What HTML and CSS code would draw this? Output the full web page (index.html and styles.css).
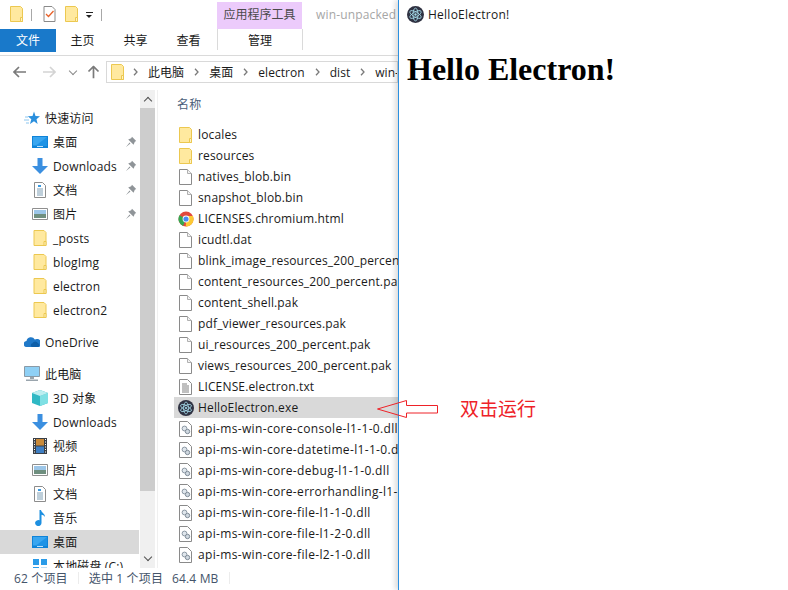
FILE: index.html
```html
<!DOCTYPE html>
<html lang="zh-CN">
<head>
  <meta charset="UTF-8">
  <title>HelloElectron</title>
  <link rel="stylesheet" href="styles.css">
</head>
<body>

  <!-- Icon sprites -->
  <svg class="sprites" width="0" height="0">
    <symbol id="folder" viewBox="0 0 13 16">
      <path d="M.5.5h10l2 2v13H.5z" fill="#ffe99f" stroke="#ecc850"/>
      <path d="M10.5 11.5h2v4h-2z" fill="#fff3c4" stroke="#ecc850"/>
    </symbol>
    <symbol id="file" viewBox="0 0 13 16">
      <path d="M.5.5h8l4 4v11H.5z" fill="#fff" stroke="#8a8a8a"/>
      <path d="M8.5.5v4h4" fill="#f2f2f2" stroke="#b0b0b0"/>
    </symbol>
    <symbol id="textfile" viewBox="0 0 13 16">
      <path d="M.5.5h8l4 4v11H.5z" fill="#fff" stroke="#8a8a8a"/>
      <path d="M3 5h5M3 7h7M3 9h7M3 11h7M3 13h7" stroke="#808080"/>
    </symbol>
    <symbol id="dll" viewBox="0 0 13 16">
      <path d="M.5.5h8l4 4v11H.5z" fill="#fff" stroke="#8a8a8a"/>
      <circle cx="5.5" cy="7.5" r="2.4" fill="#dfe6ec" stroke="#8c98a4"/>
      <circle cx="8.5" cy="10.5" r="2.2" fill="#cfd8e0" stroke="#7f8b97"/>
    </symbol>
    <symbol id="chrome" viewBox="0 0 16 16">
      <circle cx="8" cy="8" r="7.5" fill="#e2483d"/>
      <path d="M8 8 1.5 4.2A7.5 7.5 0 0 0 5 14.9z" fill="#34a853"/>
      <path d="M8 5h7a7.5 7.5 0 0 1-7.2 10.5L8 8z" fill="#fcc934"/>
      <circle cx="8" cy="8" r="3.4" fill="#fff"/>
      <circle cx="8" cy="8" r="2.6" fill="#4a8af4"/>
    </symbol>
    <symbol id="electron" viewBox="0 0 16 16">
      <circle cx="8" cy="8" r="8" fill="#2f3242"/>
      <g fill="none" stroke="#a5d9e8" stroke-width=".8">
        <ellipse cx="8" cy="8" rx="6" ry="2.4" transform="rotate(30 8 8)"/>
        <ellipse cx="8" cy="8" rx="6" ry="2.4" transform="rotate(90 8 8)"/>
        <ellipse cx="8" cy="8" rx="6" ry="2.4" transform="rotate(150 8 8)"/>
      </g>
      <circle cx="8" cy="8" r="1.1" fill="#a5d9e8"/>
    </symbol>
    <symbol id="pin" viewBox="0 0 12 12">
      <path d="M7 .8 11.2 5 9.8 5.8 8.6 8.8 3.2 3.4 6.2 2.2zM4.600 6.600 1 11l4.400-3.600z" fill="#8f9498"/>
    </symbol>
    <symbol id="star" viewBox="0 0 16 16">
      <path d="M10 1.5 11.500 6 16 6.200 12.500 9.200 13.600 14 10 11.300 6 14 7.300 9.200 3.800 6.200 8.500 6z" fill="#2a8fdd"/>
      <path d="M1 7h3M0 10h5M2 13h3" stroke="#8cc6ef"/>
    </symbol>
    <symbol id="desktop" viewBox="0 0 16 12">
      <path d="M0 0h16v12H0z" fill="#0f83d8"/>
      <path d="M1 1h14v8.500H1z" fill="#39a6f0"/>
      <path d="M15 1v8.500H4z" fill="#1e93e6"/>
      <path d="M5 10.500h6" stroke="#bfe3fb"/>
    </symbol>
    <symbol id="download" viewBox="0 0 16 16">
      <path d="M5.500 0h5v8H16l-8 8-8-8h5.500z" fill="#3b8fe0"/>
    </symbol>
    <symbol id="doc" viewBox="0 0 12 16">
      <path d="M.5.5h8l3 3v12H.5z" fill="#fff" stroke="#8c8c8c"/>
      <path d="M3 7h6M3 9h6M3 11h6M3 13h6" stroke="#7f9fb5"/>
      <path d="M4 3h3v2H4z" fill="#3b9ae0"/>
    </symbol>
    <symbol id="picture" viewBox="0 0 16 12">
      <path d="M.5.5h15v11H.5z" fill="#fff" stroke="#8f8f8f"/>
      <path d="M2 2h12v4H2z" fill="#9cc6e8"/>
      <path d="M2 6h12v4H2z" fill="#6f8f7f"/>
    </symbol>
    <symbol id="cloud" viewBox="0 0 16 12">
      <path d="M3 11a3 3 0 0 1-.5-6A4.500 4.500 0 0 1 10.800 3.500 3.700 3.700 0 0 1 15 11z" fill="#1f78c8"/>
      <path d="M8 11a2 2 0 0 1 .5-3.800 3 3 0 0 1 5.500 0A2 2 0 0 1 14 11z" fill="#0e5fa8"/>
    </symbol>
    <symbol id="pc" viewBox="0 0 16 16">
      <path d="M.5.5h15v10H.5z" fill="#8fd0f5" stroke="#8a9aa6"/>
      <path d="M6 11h4v2H6zM2 13.500h12v1.500H2z" fill="#9aa5ad"/>
    </symbol>
    <symbol id="cube" viewBox="0 0 16 16">
      <path d="M8 0 16 3v10l-8 3-8-3V3z" fill="#2fb8c4"/>
      <path d="M8 6v10l8-3V3z" fill="#7fe0e4"/>
      <path d="M8 0 16 3 8 6 0 3z" fill="#bdeef0"/>
    </symbol>
    <symbol id="video" viewBox="0 0 14 16">
      <path d="M0 0h14v16H0z" fill="#3a3f46"/>
      <path d="M3 1h8v6.500H3z" fill="#c98a3a"/>
      <path d="M3 8.500h8V15H3z" fill="#3f7fc4"/>
      <path d="M1 1.500h1M1 4h1M1 6.500h1M1 9h1M1 11.500h1M1 14h1M12 1.500h1M12 4h1M12 6.500h1M12 9h1M12 11.500h1M12 14h1" stroke="#fff"/>
    </symbol>
    <symbol id="music" viewBox="0 0 12 16">
      <path d="M5.500 0h1.500c.5 3 4 3.500 4 7-1-1.500-2.500-2-3.500-2.200V13a3.200 3 0 1 1-2-2.700z" fill="#1d8fe0"/>
    </symbol>
    <symbol id="disk" viewBox="0 0 16 16">
      <path d="M1 1h6v6H1zM9 1h6v6H9zM1 9h6v6H1z" fill="#2a9be8"/>
      <path d="M9 9h6v6H9z" fill="#bfe0f6"/>
    </symbol>
    <symbol id="checklist" viewBox="0 0 12 16">
      <path d="M.5.5h8l3 3v12H.5z" fill="#fff" stroke="#8a8a8a"/>
      <path d="M2.500 8 5 10.500 10 5" fill="none" stroke="#e8622a" stroke-width="1.300"/>
    </symbol>
    <symbol id="chevron" viewBox="0 0 5 8">
      <path d="M1 .8 4 4 1 7.200" fill="none" stroke="#7a7a7a" stroke-width="1.300"/>
    </symbol>
    <symbol id="arrow-left" viewBox="0 0 13 12">
      <path d="M6 1 1 6l5 5M1 6h12" fill="none" stroke="currentColor" stroke-width="1.700"/>
    </symbol>
  </svg>

  <div class="screen">

    <!-- Explorer window -->
    <div class="explorer">

      <div class="titlebar">
        <svg class="ico-folder qat-first"><use href="#folder"/></svg>
        <span class="qat-sep"></span>
        <svg class="ico-file"><use href="#checklist"/></svg>
        <svg class="ico-folder"><use href="#folder"/></svg>
        <span class="qat-drop"></span>
        <span class="qat-sep"></span>
        <span class="tool-tab">应用程序工具</span>
        <span class="win-title">win-unpacked</span>
      </div>

      <div class="ribbon">
        <span class="tab tab-file">文件</span>
        <span class="tab">主页</span>
        <span class="tab">共享</span>
        <span class="tab">查看</span>
        <span class="tab tab-tool">管理</span>
      </div>

      <div class="addressbar">
        <svg class="nav-arrow"><use href="#arrow-left"/></svg>
        <svg class="nav-arrow nav-forward"><use href="#arrow-left"/></svg>
        <span class="nav-down"></span>
        <svg class="nav-arrow nav-up"><use href="#arrow-left"/></svg>
        <div class="crumbs">
          <svg class="ico-folder"><use href="#folder"/></svg>
          <svg class="chev"><use href="#chevron"/></svg><span>此电脑</span>
          <svg class="chev"><use href="#chevron"/></svg><span>桌面</span>
          <svg class="chev"><use href="#chevron"/></svg><span>electron</span>
          <svg class="chev"><use href="#chevron"/></svg><span>dist</span>
          <svg class="chev"><use href="#chevron"/></svg><span>win-unpacked</span>
        </div>
      </div>

      <div class="panes">

        <!-- Navigation pane -->
        <div class="navpane">
          <div class="navtree">
            <div class="nav-row top"><svg class="ico16"><use href="#star"/></svg>快速访问</div>
            <div class="nav-row"><svg class="ico16"><use href="#desktop"/></svg>桌面<svg class="pin"><use href="#pin"/></svg></div>
            <div class="nav-row"><svg class="ico16"><use href="#download"/></svg>Downloads<svg class="pin"><use href="#pin"/></svg></div>
            <div class="nav-row"><svg class="ico16"><use href="#doc"/></svg>文档<svg class="pin"><use href="#pin"/></svg></div>
            <div class="nav-row"><svg class="ico16"><use href="#picture"/></svg>图片<svg class="pin"><use href="#pin"/></svg></div>
            <div class="nav-row"><svg class="ico16"><use href="#folder"/></svg>_posts</div>
            <div class="nav-row"><svg class="ico16"><use href="#folder"/></svg>blogImg</div>
            <div class="nav-row"><svg class="ico16"><use href="#folder"/></svg>electron</div>
            <div class="nav-row"><svg class="ico16"><use href="#folder"/></svg>electron2</div>
            <div class="nav-row top group"><svg class="ico16"><use href="#cloud"/></svg>OneDrive</div>
            <div class="nav-row top group"><svg class="ico16"><use href="#pc"/></svg>此电脑</div>
            <div class="nav-row"><svg class="ico16"><use href="#cube"/></svg>3D 对象</div>
            <div class="nav-row"><svg class="ico16"><use href="#download"/></svg>Downloads</div>
            <div class="nav-row"><svg class="ico16"><use href="#video"/></svg>视频</div>
            <div class="nav-row"><svg class="ico16"><use href="#picture"/></svg>图片</div>
            <div class="nav-row"><svg class="ico16"><use href="#doc"/></svg>文档</div>
            <div class="nav-row"><svg class="ico16"><use href="#music"/></svg>音乐</div>
            <div class="nav-row selected"><svg class="ico16"><use href="#desktop"/></svg>桌面</div>
            <div class="nav-row"><svg class="ico16"><use href="#disk"/></svg>本地磁盘 (C:)</div>
          </div>
          <div class="scrollbar">
            <span class="scroll-btn scroll-up"></span>
            <span class="scroll-thumb"></span>
            <span class="scroll-btn scroll-down"></span>
          </div>
        </div>

        <!-- File list -->
        <div class="filepane">
          <div class="col-head">名称</div>
          <div class="file-row"><svg class="ico-file"><use href="#folder"/></svg>locales</div>
          <div class="file-row"><svg class="ico-file"><use href="#folder"/></svg>resources</div>
          <div class="file-row"><svg class="ico-file"><use href="#file"/></svg>natives_blob.bin</div>
          <div class="file-row"><svg class="ico-file"><use href="#file"/></svg>snapshot_blob.bin</div>
          <div class="file-row"><svg class="ico-app"><use href="#chrome"/></svg>LICENSES.chromium.html</div>
          <div class="file-row"><svg class="ico-file"><use href="#file"/></svg>icudtl.dat</div>
          <div class="file-row"><svg class="ico-file"><use href="#file"/></svg>blink_image_resources_200_percent.pak</div>
          <div class="file-row"><svg class="ico-file"><use href="#file"/></svg>content_resources_200_percent.pak</div>
          <div class="file-row"><svg class="ico-file"><use href="#file"/></svg>content_shell.pak</div>
          <div class="file-row"><svg class="ico-file"><use href="#file"/></svg>pdf_viewer_resources.pak</div>
          <div class="file-row"><svg class="ico-file"><use href="#file"/></svg>ui_resources_200_percent.pak</div>
          <div class="file-row"><svg class="ico-file"><use href="#file"/></svg>views_resources_200_percent.pak</div>
          <div class="file-row"><svg class="ico-file"><use href="#textfile"/></svg>LICENSE.electron.txt</div>
          <div class="file-row selected"><svg class="ico-app"><use href="#electron"/></svg>HelloElectron.exe</div>
          <div class="file-row dll"><svg class="ico-file"><use href="#dll"/></svg>api-ms-win-core-console-l1-1-0.dll</div>
          <div class="file-row dll"><svg class="ico-file"><use href="#dll"/></svg>api-ms-win-core-datetime-l1-1-0.dll</div>
          <div class="file-row dll"><svg class="ico-file"><use href="#dll"/></svg>api-ms-win-core-debug-l1-1-0.dll</div>
          <div class="file-row dll"><svg class="ico-file"><use href="#dll"/></svg>api-ms-win-core-errorhandling-l1-1-0.dll</div>
          <div class="file-row dll"><svg class="ico-file"><use href="#dll"/></svg>api-ms-win-core-file-l1-1-0.dll</div>
          <div class="file-row dll"><svg class="ico-file"><use href="#dll"/></svg>api-ms-win-core-file-l1-2-0.dll</div>
          <div class="file-row dll"><svg class="ico-file"><use href="#dll"/></svg>api-ms-win-core-file-l2-1-0.dll</div>
        </div>
      </div>

      <div class="statusbar">
        <span class="status-count">62 个项目</span>
        <span class="status-sep"></span>
        <span class="status-picked">选中 1 个项目</span>
        <span class="status-size">64.4 MB</span>
        <span class="status-sep"></span>
      </div>
    </div>

    <!-- Electron window -->
    <div class="electron">
      <div class="app-title">
        <svg class="ico-title"><use href="#electron"/></svg>
        HelloElectron!
      </div>
      <h1>Hello Electron!</h1>
    </div>

    <!-- Annotation drawn over the screenshot -->
    <svg class="callout-arrow" width="62" height="18" viewBox="0 0 62 18">
      <path d="M.5 9 29.500.5v5h31V13h-31v4.500z" fill="none" stroke="#ee2228"/>
    </svg>
    <span class="callout-text">双击运行</span>
  </div>

</body>
</html>
```

FILE: styles.css
```css
body {
  margin: 0;
  font-family: "Open Sans", "Noto Sans CJK SC", sans-serif;
  font-size: 12px;
  color: #1a1a1a;
  background-color: #fff;
}

.sprites {
  display: block;
}

svg {
  flex: none;
}

.screen {
  position: relative;
  display: flex;
  width: 788px;
  height: 590px;
  overflow: hidden;
}

/* Explorer window */
.explorer {
  display: flex;
  flex-direction: column;
  flex: none;
  width: 398px;
  height: 590px;
  overflow: hidden;
  white-space: nowrap;
  letter-spacing: 0.15px;
}

.titlebar {
  display: flex;
  align-items: center;
  flex: none;
  height: 29px;
}

.ico-folder {
  width: 13px;
  height: 16px;
  margin-top: -1px;
}

.qat-first {
  margin-left: 10px;
}

.qat-sep {
  width: 1px;
  height: 12px;
  margin: 0 11px 0 8px;
  background-color: #a8a8a8;
}

.titlebar .ico-file {
  margin: -1px 9px 0 0;
}

.qat-drop {
  width: 7px;
  height: 6px;
  margin: 1px 0 0 8px;
  border-top: 1px solid #222;
}

.qat-drop::after {
  content: "";
  display: block;
  width: 0;
  margin-top: 2px;
  border-left: 3.5px solid transparent;
  border-right: 3.5px solid transparent;
  border-top: 3px solid #222;
}

.tool-tab {
  align-self: flex-end;
  width: 85px;
  height: 27px;
  margin-left: 104px;
  line-height: 26px;
  text-align: center;
  letter-spacing: 0;
  color: #4a4a4a;
  background-color: #eccbfb;
}

.win-title {
  margin-left: 14px;
  color: #a6a6a6;
}

.ribbon {
  display: flex;
  flex: none;
  height: 23px;
  line-height: 23px;
  padding-bottom: 3px;
  border-bottom: 1px solid #dadada;
  letter-spacing: 0;
}

.tab {
  width: 53px;
  text-align: center;
}

.tab-file {
  width: 56px;
  color: #fff;
  background-color: #1979ca;
}

.tab-tool {
  width: 84px;
  height: 21px;
  margin-left: 2px;
  border-left: 1px solid #dadada;
  border-right: 1px solid #dadada;
}

.addressbar {
  display: flex;
  align-items: center;
  flex: none;
  height: 22px;
  margin-top: 5px;
}

.nav-arrow {
  width: 13px;
  height: 12px;
  margin-left: 13px;
  color: #7a7a7a;
}

.nav-forward {
  margin-left: 17px;
  color: #d4d4d4;
  transform: scaleX(-1);
}

.nav-down {
  width: 5px;
  height: 5px;
  margin: -3px 0 0 14px;
  border-right: 1px solid #8a8a8a;
  border-bottom: 1px solid #8a8a8a;
  transform: rotate(45deg);
}

.nav-up {
  margin-left: 11px;
  transform: rotate(90deg);
}

.crumbs {
  display: flex;
  align-items: center;
  flex: none;
  width: 292px;
  height: 22px;
  margin-left: 6px;
  padding-left: 4px;
  border: 1px solid #d9d9d9;
  box-sizing: border-box;
  overflow: hidden;
  letter-spacing: 0.05px;
}

.crumbs .ico-folder {
  margin: 0 9px 0 0;
}

.chev {
  width: 5px;
  height: 8px;
  margin-right: 10px;
}

.crumbs span {
  margin-right: 10px;
}

.panes {
  display: flex;
  flex: 1;
  min-height: 0;
  margin-top: 7px;
}

/* Navigation pane */
.navpane {
  display: flex;
  flex: none;
  width: 158px;
  overflow: hidden;
  border-right: 1px solid #f0f0f0;
  box-sizing: border-box;
}

.navtree {
  width: 140px;
  padding-top: 16px;
}

.nav-row {
  display: flex;
  align-items: center;
  height: 24px;
  padding-left: 32px;
}

.nav-row.top {
  padding-left: 24px;
}

.nav-row.group {
  margin-top: 8px;
}

.nav-row.selected {
  background-color: #d9d9d9;
  margin-right: 1px;
}

.ico16 {
  width: 16px;
  height: 16px;
  margin-right: 5px;
}

.pin {
  width: 12px;
  height: 12px;
  margin-left: auto;
  margin-right: 3px;
}

.scrollbar {
  display: flex;
  flex-direction: column;
  width: 15px;
  background-color: #f0f0f0;
}

.scroll-btn {
  position: relative;
  flex: none;
  height: 18px;
}

.scroll-up::after,
.scroll-down::after {
  content: "";
  position: absolute;
  left: 5px;
  width: 5px;
  height: 5px;
  border-left: 1px solid #505050;
  border-top: 1px solid #505050;
}

.scroll-up::after {
  top: 8px;
  transform: rotate(45deg);
}

.scroll-down::after {
  top: 4px;
  transform: rotate(225deg);
}

.scroll-down {
  margin-top: auto;
}

.scroll-thumb {
  height: 383px;
  background-color: #cdcdcd;
}

/* File list */
.filepane {
  flex: 1;
  min-width: 0;
  overflow: hidden;
}

.col-head {
  height: 34px;
  padding-left: 19px;
  line-height: 29px;
  color: #4c607a;
}

.file-row {
  display: flex;
  align-items: center;
  height: 21px;
  margin-left: 16px;
  padding-left: 5px;
}

.file-row.selected {
  background-color: #d9d9d9;
}

.file-row.dll {
  letter-spacing: 0.34px;
}

.ico-file {
  width: 13px;
  height: 16px;
  margin-right: 6px;
}

.ico-app {
  width: 16px;
  height: 16px;
  margin: 0 4px 0 -1px;
}

.statusbar {
  display: flex;
  align-items: center;
  flex: none;
  height: 20px;
  padding-bottom: 2px;
  color: #44546a;
}

.status-count {
  margin-left: 14px;
}

.status-sep {
  width: 1px;
  height: 12px;
  margin: 0 10px;
  background-color: #ececec;
}

.status-size {
  margin-left: 9px;
}

/* Electron window */
.electron {
  position: relative;
  flex: 1;
  border-left: 1px solid #2b90e0;
  box-shadow: -3px 0 5px rgba(0, 0, 0, 0.14);
  background-color: #fff;
}

.app-title {
  display: flex;
  align-items: center;
  height: 29px;
  padding-left: 8px;
  letter-spacing: 0.25px;
}

.ico-title {
  width: 17px;
  height: 17px;
  margin-right: 4px;
}

h1 {
  margin: 22px 0 0 8px;
  font-family: "Liberation Serif", serif;
  font-size: 32px;
  line-height: 37px;
  color: #000;
}

/* Annotation */
.callout-arrow {
  position: absolute;
  left: 377px;
  top: 400px;
}

.callout-text {
  position: absolute;
  left: 460px;
  top: 397px;
  font-size: 19px;
  line-height: 24px;
  color: #ee2228;
}
```
